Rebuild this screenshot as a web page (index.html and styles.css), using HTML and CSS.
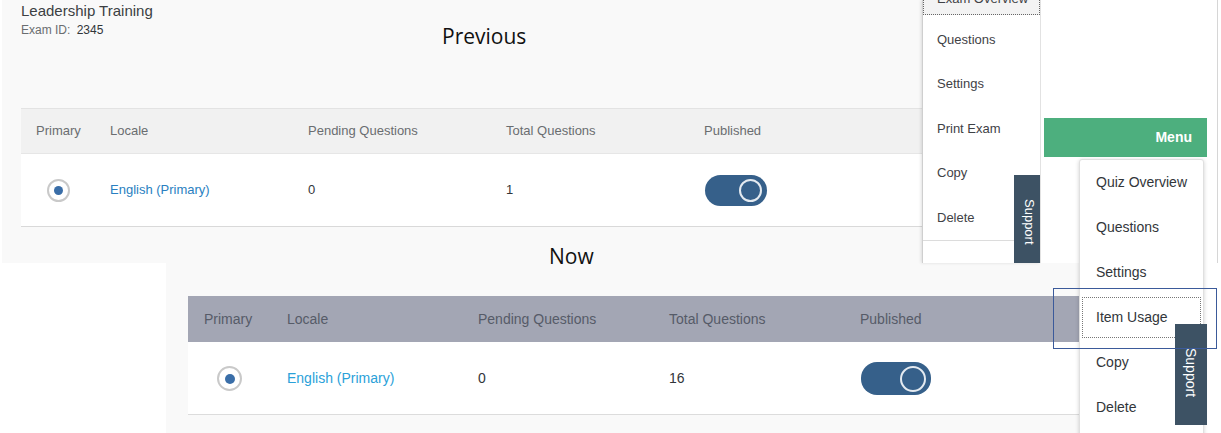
FILE: index.html
```html
<!DOCTYPE html>
<html lang="en">
<head>
  <meta charset="UTF-8" />
  <title>Quiz Menu - Previous vs Now</title>
  <link rel="stylesheet" href="styles.css">
</head>
<body>
  <div class="page">

    <!-- previous screenshot -->
    <div class="prev">
      <div class="prev-head">
        <div class="exam-info">
          <div class="exam-title">Leadership Training</div>
          <div class="exam-id">Exam ID: <span>2345</span></div>
        </div>
        <div class="shot-label">Previous</div>
      </div>

      <div class="locale-table small">
        <div class="t-head">
          <div>Primary</div>
          <div>Locale</div>
          <div>Pending Questions</div>
          <div>Total Questions</div>
          <div>Published</div>
        </div>
        <div class="t-row">
          <div><span class="radio"></span></div>
          <div><a class="locale-link">English (Primary)</a></div>
          <div>0</div>
          <div>1</div>
          <div><span class="toggle"><span class="knob"></span></span></div>
        </div>
      </div>

      <div class="old-menu">
        <ul>
          <li class="focused">Exam Overview</li>
          <li>Questions</li>
          <li>Settings</li>
          <li>Print Exam</li>
          <li>Copy</li>
          <li>Delete</li>
        </ul>
      </div>
      <div class="support-tab old-support">Support</div>
    </div>

    <div class="now-label">Now</div>

    <!-- current screenshot -->
    <div class="now">
      <div class="locale-table large">
        <div class="t-head">
          <div>Primary</div>
          <div>Locale</div>
          <div>Pending Questions</div>
          <div>Total Questions</div>
          <div>Published</div>
        </div>
        <div class="t-row">
          <div><span class="radio"></span></div>
          <div><a class="locale-link">English (Primary)</a></div>
          <div>0</div>
          <div>16</div>
          <div><span class="toggle"><span class="knob"></span></span></div>
        </div>
      </div>
    </div>

    <div class="menu-col">
      <div class="menu-btn">Menu</div>
      <ul class="new-menu">
        <li>Quiz Overview</li>
        <li>Questions</li>
        <li>Settings</li>
        <li class="focused">Item Usage</li>
        <li>Copy</li>
        <li>Delete</li>
      </ul>
      <div class="support-tab new-support">Support</div>
    </div>

    <div class="callout"></div>
  </div>
</body>
</html>
```

FILE: styles.css
```css
body {
  margin: 0;
  background: #fff;
  font-family: "Liberation Sans", Arial, sans-serif;
  color: #32363a;
}

.page {
  position: relative;
  width: 1221px;
  height: 433px;
  overflow: hidden;
}

/* ---------- previous ---------- */

.prev {
  position: relative;
  width: 1038px;
  height: 263px;
  margin-left: 2px;
  background: #f9f9f9;
}

.prev-head {
  display: grid;
  grid-template-columns: 421px auto;
  height: 108px;
  padding-left: 19px;
}

.exam-info {
  padding-top: 2px;
}

.exam-title {
  font-size: 15px;
  line-height: 18px;
  color: #3c3f43;
}

.exam-id {
  margin-top: 3px;
  font-size: 12px;
  line-height: 15px;
  color: #6a6d70;
}

.exam-id span {
  margin-left: 3px;
  color: #32363a;
}

.shot-label {
  padding-top: 22px;
  font-family: "Open Sans", sans-serif;
  font-size: 21px;
  line-height: 28px;
  color: #111;
}

.now-label {
  position: absolute;
  left: 549px;
  top: 242px;
  font-family: "Open Sans", sans-serif;
  font-size: 21px;
  line-height: 28px;
  color: #111;
}

/* ---------- locale table ---------- */

.locale-table .t-head,
.locale-table .t-row {
  display: grid;
  align-items: center;
}

.locale-table.small {
  margin-left: 19px;
  width: 1019px;
  font-size: 13px;
}

.small .t-head,
.small .t-row {
  grid-template-columns: 74px 198px 198px 198px 1fr;
  padding-left: 15px;
}

.small .t-head {
  height: 42px;
  padding-bottom: 2px;
  background: #f1f1f1;
  border-top: 1px solid #e3e3e3;
  color: #6a6d70;
}

.small .t-row {
  height: 71px;
  padding-bottom: 1px;
  background: #fff;
  border-top: 1px solid #e6e6e6;
  border-bottom: 1px solid #d9d9d9;
}

.locale-table.large {
  margin-left: 22px;
  width: 891px;
  font-size: 14px;
}

.large .t-head,
.large .t-row {
  grid-template-columns: 83px 191px 191px 191px 1fr;
  padding-left: 16px;
}

.large .t-head {
  height: 45px;
  padding-bottom: 1px;
  background: #a3a6b4;
  color: #565b68;
}

.large .t-row {
  height: 72px;
  background: #fff;
  border-bottom: 1px solid #dcdcdc;
}

.locale-link {
  color: #2a7fc1;
  text-decoration: none;
}

.large .locale-link {
  color: #2aa1d9;
}

.radio {
  display: flex;
  align-items: center;
  justify-content: center;
  box-sizing: border-box;
  width: 23px;
  height: 23px;
  margin-left: 11px;
  margin-top: 1px;
  border: 2px solid #c9c9c9;
  border-radius: 50%;
  background: #fff;
}

.radio::after {
  content: "";
  width: 9px;
  height: 9px;
  border-radius: 50%;
  background: #3a6ea8;
}

.large .radio {
  width: 25px;
  height: 25px;
  margin-left: 13px;
}

.large .radio::after {
  width: 10px;
  height: 10px;
}

.toggle {
  display: flex;
  align-items: center;
  justify-content: flex-end;
  box-sizing: border-box;
  width: 62px;
  height: 31px;
  margin-left: 1px;
  margin-top: 1px;
  padding-right: 5px;
  border-radius: 16px;
  background: #36608a;
}

.knob {
  box-sizing: border-box;
  width: 23px;
  height: 23px;
  border: 2px solid #e4eaf0;
  border-radius: 50%;
}

.large .toggle {
  width: 70px;
  height: 33px;
  padding-right: 5px;
}

.large .knob {
  width: 26px;
  height: 26px;
}

/* ---------- menus ---------- */

.old-menu {
  position: absolute;
  top: 0;
  right: 0;
  width: 117px;
  height: 263px;
  overflow: hidden;
  background: #fff;
  border-left: 1px solid #cfcfcf;
  box-shadow: -1px 0 3px rgba(0, 0, 0, 0.12);
}

.old-menu ul {
  list-style: none;
  margin: -27px 0 0;
  padding: 0;
  border-bottom: 1px solid #dcdcdc;
}

.old-menu li {
  height: 44.5px;
  line-height: 44.5px;
  padding-left: 14px;
  font-size: 13px;
  color: #3f4246;
}

.old-menu li.focused {
  height: 42px;
  line-height: 52px;
  margin-bottom: 2.5px;
  outline: 1px dotted #666;
  outline-offset: -1px;
  background: #f3f3f3;
}

.support-tab {
  position: absolute;
  box-sizing: border-box;
  padding-top: 24px;
  background: #3d5264;
  color: #fff;
  writing-mode: vertical-rl;
  line-height: 30px;
}

.old-support {
  left: 1012px;
  top: 175px;
  width: 30px;
  height: 88px;
  font-size: 13px;
}

.menu-col {
  position: absolute;
  left: 1040px;
  top: 0;
  width: 178px;
  height: 263px;
  padding-top: 118px;
  box-sizing: border-box;
  background: #fff;
  border-left: 1px solid #e2e2e2;
  border-right: 1px solid #d6d6d6;
}

.menu-btn {
  box-sizing: border-box;
  width: 163px;
  height: 39px;
  margin-left: 3px;
  padding-right: 15px;
  background: #4daf7e;
  color: #fff;
  font-size: 14px;
  font-weight: bold;
  line-height: 39px;
  text-align: right;
}

.new-menu {
  list-style: none;
  box-sizing: border-box;
  width: 125px;
  height: 280px;
  margin: 2px 0 0 38px;
  padding: 0;
  background: #fff;
  border: 1px solid #e0e0e0;
  border-radius: 3px;
  box-shadow: 0 1px 4px rgba(0, 0, 0, 0.18);
}

.new-menu li {
  height: 45px;
  line-height: 45px;
  padding-left: 16px;
  font-size: 14px;
  color: #32363a;
}

.new-menu li.focused {
  outline: 1px dotted #777;
  outline-offset: -3px;
}

.new-support {
  left: 134px;
  top: 324px;
  width: 32px;
  height: 101px;
  font-size: 14px;
  line-height: 32px;
}

.callout {
  position: absolute;
  left: 1053px;
  top: 288px;
  width: 162px;
  height: 59px;
  border: 1.5px solid #3b5a9a;
}

/* ---------- now ---------- */

.now {
  width: 913px;
  height: 170px;
  margin-left: 166px;
  padding-top: 33px;
  box-sizing: border-box;
  background: #f9f9f9;
}
```
